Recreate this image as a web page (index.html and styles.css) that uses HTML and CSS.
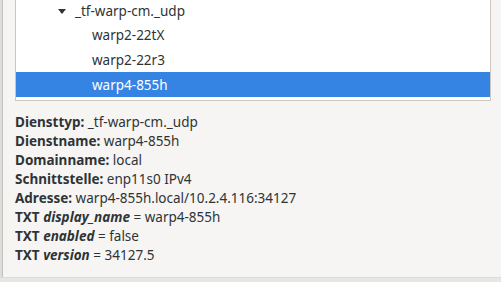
FILE: index.html
```html
<!DOCTYPE html>
<html>
<head>
<meta charset="utf-8">
<link rel="stylesheet" href="styles.css">
</head>
<body>
<div class="window">
  <div class="edge"></div>
  <div class="main">
    <div class="list">
      <div class="row row-first group">
        <svg class="arrow" width="8" height="5" viewBox="0 0 8 5"><path d="M0 0H8L4 5Z" fill="#2e3436"/></svg>
        <span>_tf-warp-cm._udp</span>
      </div>
      <div class="row child">warp2-22tX</div>
      <div class="row child">warp2-22r3</div>
      <div class="row child selected">warp4-855h</div>
      <div class="list-end"></div>
    </div>
    <div class="details">
      <div class="line"><b>Diensttyp:</b> _tf-warp-cm._udp</div>
      <div class="line"><b>Dienstname:</b> warp4-855h</div>
      <div class="line"><b>Domainname:</b> local</div>
      <div class="line"><b>Schnittstelle:</b> enp11s0 IPv4</div>
      <div class="line"><b>Adresse:</b> warp4-855h.local/10.2.4.116:34127</div>
      <div class="line"><b>TXT <i>display_name</i></b> = warp4-855h</div>
      <div class="line"><b>TXT <i>enabled</i></b> = false</div>
      <div class="line"><b>TXT <i>version</i></b> = 34127.5</div>
    </div>
  </div>
</div>
<div class="bottom"></div>
</body>
</html>
```
FILE: styles.css
```css
html, body {
  margin: 0;
  padding: 0;
}
body {
  width: 501px;
  height: 282px;
  overflow: hidden;
  background: #f6f5f4;
  font-family: "Noto Sans", sans-serif;
  font-size: 13.5px;
  color: #2e3436;
  display: flex;
  flex-direction: column;
}
.window {
  display: flex;
  height: 278px;
}
.edge {
  width: 2px;
  background: #dedddc;
  border-right: 1px solid #c3c0bd;
  flex: none;
}
.main {
  flex: 1;
  padding-left: 12px;
  padding-right: 10px;
}
.list {
  background: #ffffff;
  border: 1px solid #cdc7c2;
  border-top: none;
  width: 474px;
}
.row {
  height: 25px;
  display: flex;
  align-items: center;
}
.row-first {
  height: 22px;
}
.group {
  padding-left: 42px;
}
.arrow {
  margin-right: 9px;
}
.child {
  padding-left: 76px;
}
.selected {
  background: #3584e4;
  color: #ffffff;
}
.list-end {
  height: 3px;
}
.details {
  padding-top: 12px;
  color: #2e3436;
}
.line {
  line-height: 19px;
  white-space: nowrap;
}
.line b {
  font-weight: bold;
}
.bottom {
  height: 4px;
  background: #e6e6e5;
  border-top: 1px solid #dcdcdb;
}
```
